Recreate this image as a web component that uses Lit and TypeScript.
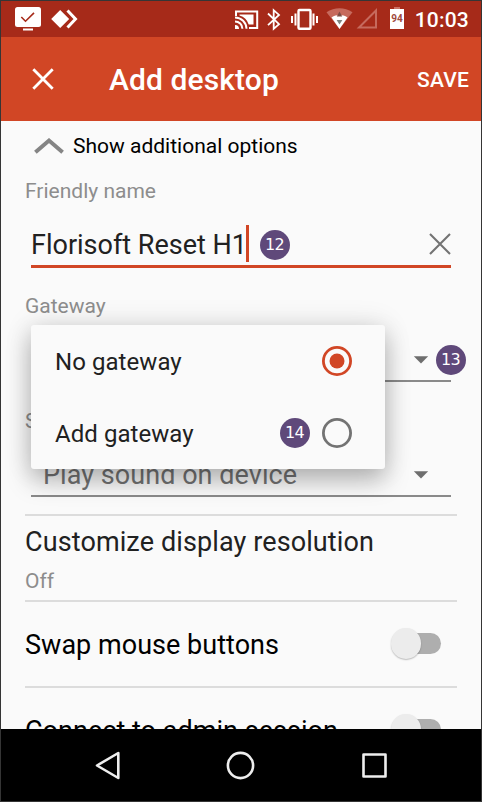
import { LitElement, html, css } from "lit";
import { customElement } from "lit/decorators.js";

const caret = html`<svg class="caret" width="16" height="8" viewBox="0 0 16 8"><path d="M.8 .3h14.400L8 7.500z" fill="#6e6e6e" /></svg>`;

@customElement("app-root")
export class AppRoot extends LitElement {
  static styles = css`
    :host {
      display: block;
      font-family: Roboto, sans-serif;
      color: #000;
    }
    * { box-sizing: border-box; }
    svg { display: block; flex: none; }
    .screen {
      position: relative;
      width: 482px;
      height: 802px;
      border: 1px solid #353535;
      display: flex;
      flex-direction: column;
      background: #fafafa;
      overflow: hidden;
      white-space: nowrap;
    }
    .status {
      height: 36px;
      flex: none;
      background: #a62a19;
      display: flex;
      justify-content: space-between;
      color: #fff;
    }
    .clock {
      font-size: 21px;
      font-weight: 500;
      line-height: 38px;
      margin-right: 12px;
      letter-spacing: 0.2px;
    }
    .right { display: flex; }
    .bar {
      height: 84px;
      flex: none;
      background: #d14625;
      color: #fff;
      display: flex;
      align-items: center;
      padding: 0 12px 0 31px;
      font-weight: 500;
    }
    .title { font-size: 30px; line-height: 36px; margin-left: 55px; flex: 1; padding-top: 1px; letter-spacing: 0.1px; }
    .save { font-size: 21px; padding-top: 2px; letter-spacing: 0.2px; }
    .content {
      height: 608px;
      flex: none;
      overflow: hidden;
      padding: 0 24px;
    }
    .expand {
      height: 50px;
      display: flex;
      align-items: center;
      gap: 9px;
      padding-left: 9px;
      font-size: 21px;
    }
    .label { height: 40px; line-height: 40px; font-size: 21px; color: #8d8d8d; }
    .label.gateway { margin-top: 18px; }
    .label.sound { margin-top: 19px; }
    .input {
      margin: 14px 6px 0;
      height: 43px;
      border-bottom: 3px solid #d14625;
      display: flex;
      align-items: center;
      font-size: 27px;
      color: #212121;
    }
    .cursor { width: 3px; height: 37px; background: #d14625; margin: -3px 0 0 -1px; }
    .badge {
      width: 30px;
      height: 30px;
      border-radius: 50%;
      background: #5f497a;
      color: #fff;
      font: 16px/30px "DejaVu Sans", sans-serif;
      letter-spacing: -0.6px;
      text-align: center;
      flex: none;
    }
    .input .badge { margin-left: 10.5px; }
    .clear { margin: -3px 0.5px 0 auto; }
    .spinner {
      position: relative;
      margin: 14px 6px 0;
      height: 42px;
      border-bottom: 2px solid #8a8a8a;
      padding: 0 22px 0 12px;
      display: flex;
      align-items: center;
      justify-content: space-between;
      font-size: 27px;
      letter-spacing: 0.05px;
      color: #737373;
    }
    .step { position: absolute; left: 404.5px; top: 5px; }
    .divider { height: 2px; background: #dcdcdc; }
    .spinner + .divider { margin-top: 17px; }
    .resolution { height: 84px; padding-top: 8px; }
    .heading { font-size: 27px; line-height: 36px; letter-spacing: 0.11px; color: #212121; }
    .sub { font-size: 21px; line-height: 43px; color: #8d8d8d; }
    .option {
      height: 84px;
      display: flex;
      align-items: center;
      justify-content: space-between;
      padding: 1px 16px 0 0;
      font-size: 27px;
      letter-spacing: 0.03px;
    }
    .switch { width: 51px; height: 31px; display: flex; align-items: center; margin-top: -2px; }
    .track { height: 21px; border-radius: 10.5px; background: #aeaeae; margin-left: -16px; flex: 1; }
    .thumb {
      position: relative;
      z-index: 1;
      width: 30.5px;
      height: 30.5px;
      margin-left: 0.5px;
      flex: none;
      border-radius: 50%;
      background: #ececec;
      box-shadow: 0 1px 1.5px rgba(0, 0, 0, 0.25);
    }
    .popup {
      position: absolute;
      left: 30px;
      top: 324px;
      width: 354px;
      height: 144px;
      border-radius: 3px;
      background: #fafafa;
      box-shadow: 0 12px 24px rgba(0, 0, 0, 0.25), 0 0 28px rgba(0, 0, 0, 0.12);
      z-index: 2;
    }
    .choice {
      height: 72px;
      padding: 0 33px 0 24px;
      display: flex;
      align-items: center;
      gap: 12.5px;
      font-size: 24px;
      letter-spacing: 0.06px;
      color: #212121;
    }
    .choice span { flex: 1; padding-top: 1px; }
    .nav { height: 72px; flex: none; background: #000; }
  `;

  private option(name: string) {
    return html`<div class="option">
      <span>${name}</span>
      <div class="switch"><div class="thumb"></div><div class="track"></div></div>
    </div>`;
  }

  private choice(name: string, checked: boolean, step?: string) {
    const color = checked ? "#d14625" : "#737373";
    return html`<div class="choice">
      <span>${name}</span>
      ${step ? html`<div class="badge">${step}</div>` : ""}
      <svg width="30" height="30" viewBox="0 0 30 30">
        <circle cx="15" cy="15" r="13.6" fill="none" stroke=${color} stroke-width="2.8" />
        <circle cx="15" cy="15" r="7.5" fill=${checked ? color : "none"} />
      </svg>
    </div>`;
  }

  render() {
    return html`<div class="screen">
      <div class="status">
        <svg width="90" height="36" viewBox="1 1 90 36">
          <rect x="15" y="7" width="26" height="20" rx="2.5" fill="#fff" />
          <path d="M21.300 17l4.200 4.200 8.500-8.300" fill="none" stroke="#a62a19" stroke-width="1.600" />
          <path d="M23 29.500h10" stroke="#fff" stroke-width="2" />
          <path d="M51.200 19l9-9 9 9-9 9z" fill="#fff" />
          <path d="M67.500 10.500l8 8.500-8 8.500" fill="none" stroke="#fff" stroke-width="3" />
        </svg>
        <div class="right">
          <svg width="182" height="36" viewBox="233 1 182 36">
            <g fill="none" stroke="#fff" stroke-width="2">
              <path d="M236 16v-4.500h21.200v16.600H249" />
              <path d="M235 17.400a11.500 11.500 0 0 1 11.500 11.400M235 21.400a7.400 7.400 0 0 1 7.400 7.400" />
              <path d="M268 13.500l11 10.600-5.300 4.700V10.200l5.300 4.700-11 10.300" stroke-width="1.800" />
              <rect x="298.500" y="10" width="12" height="18.700" rx="1" stroke-width="2.400" />
              <path d="M295.500 13.500v12M292 16v7M313.500 13.500v12M317 16v7" />
            </g>
            <path d="M239.500 14.500h14v10h-4.800a13.500 13.500 0 0 0-9.200-9z" fill="#fff" />
            <path d="M235 25a4 4 0 0 1 4 4h-4z" fill="#fff" />
            <path d="M326.500 12.300c8-5.500 18-5.500 26 0L339.500 29z" fill="#c66a5d" />
            <path d="M331.500 17.500c5-3.200 11-3.200 16 0l-8 11.500z" fill="#fff" />
            <path d="M336.800 16.500l2.700-5 2.700 5z" fill="#7f4d45" />
            <path d="M336.600 20h5.800l-2.900 4.500z" fill="#7d8580" />
            <path d="M376 10.500v17h-17z" fill="none" stroke="#c66a5d" stroke-width="2" />
            <rect x="394" y="7" width="6" height="2.500" fill="#c97367" />
            <rect x="390" y="9" width="14" height="20" fill="#fff" />
            <text x="397" y="22" text-anchor="middle" font-family="Roboto, sans-serif" font-size="10" font-weight="700" fill="#a0493d">94</text>
          </svg>
          <div class="clock">10:03</div>
        </div>
      </div>
      <div class="bar">
        <svg width="22" height="22" viewBox="0 0 22 22"><path d="M1.300 1.300l19.400 19.400M20.700 1.300L1.300 20.700" stroke="#fff" stroke-width="2.800" /></svg>
        <div class="title">Add desktop</div>
        <div class="save">SAVE</div>
      </div>
      <div class="content">
        <div class="expand">
          <svg width="30" height="16" viewBox="0 0 30 16"><path d="M1.400 14.300L15 2.600l13.600 11.700" fill="none" stroke="#858585" stroke-width="4" /></svg>
          <span>Show additional options</span>
        </div>
        <div class="label">Friendly name</div>
        <div class="input">
          <span>Florisoft Reset H1</span>
          <div class="cursor"></div>
          <div class="badge">12</div>
          <svg class="clear" width="22" height="22" viewBox="0 0 22 22"><path d="M1 1l20 20M21 1L1 21" stroke="#737373" stroke-width="2.100" /></svg>
        </div>
        <div class="label gateway">Gateway</div>
        <div class="spinner">
          <span></span>${caret}
          <div class="badge step">13</div>
        </div>
        <div class="label sound">Sound</div>
        <div class="spinner"><span>Play sound on device</span>${caret}</div>
        <div class="divider"></div>
        <div class="resolution">
          <div class="heading">Customize display resolution</div>
          <div class="sub">Off</div>
        </div>
        <div class="divider"></div>
        ${this.option("Swap mouse buttons")}
        <div class="divider"></div>
        ${this.option("Connect to admin session")}
      </div>
      <div class="nav">
        <svg width="480" height="72" viewBox="1 729 480 72" fill="none" stroke="#eee" stroke-width="2.600" stroke-linejoin="round">
          <path d="M118.300 753v25L97 765.500z" />
          <circle cx="240.500" cy="765.500" r="12.600" />
          <rect x="363.500" y="754.500" width="22" height="22" />
        </svg>
      </div>
      <div class="popup">
        ${this.choice("No gateway", true)}
        ${this.choice("Add gateway", false, "14")}
      </div>
    </div>`;
  }
}
